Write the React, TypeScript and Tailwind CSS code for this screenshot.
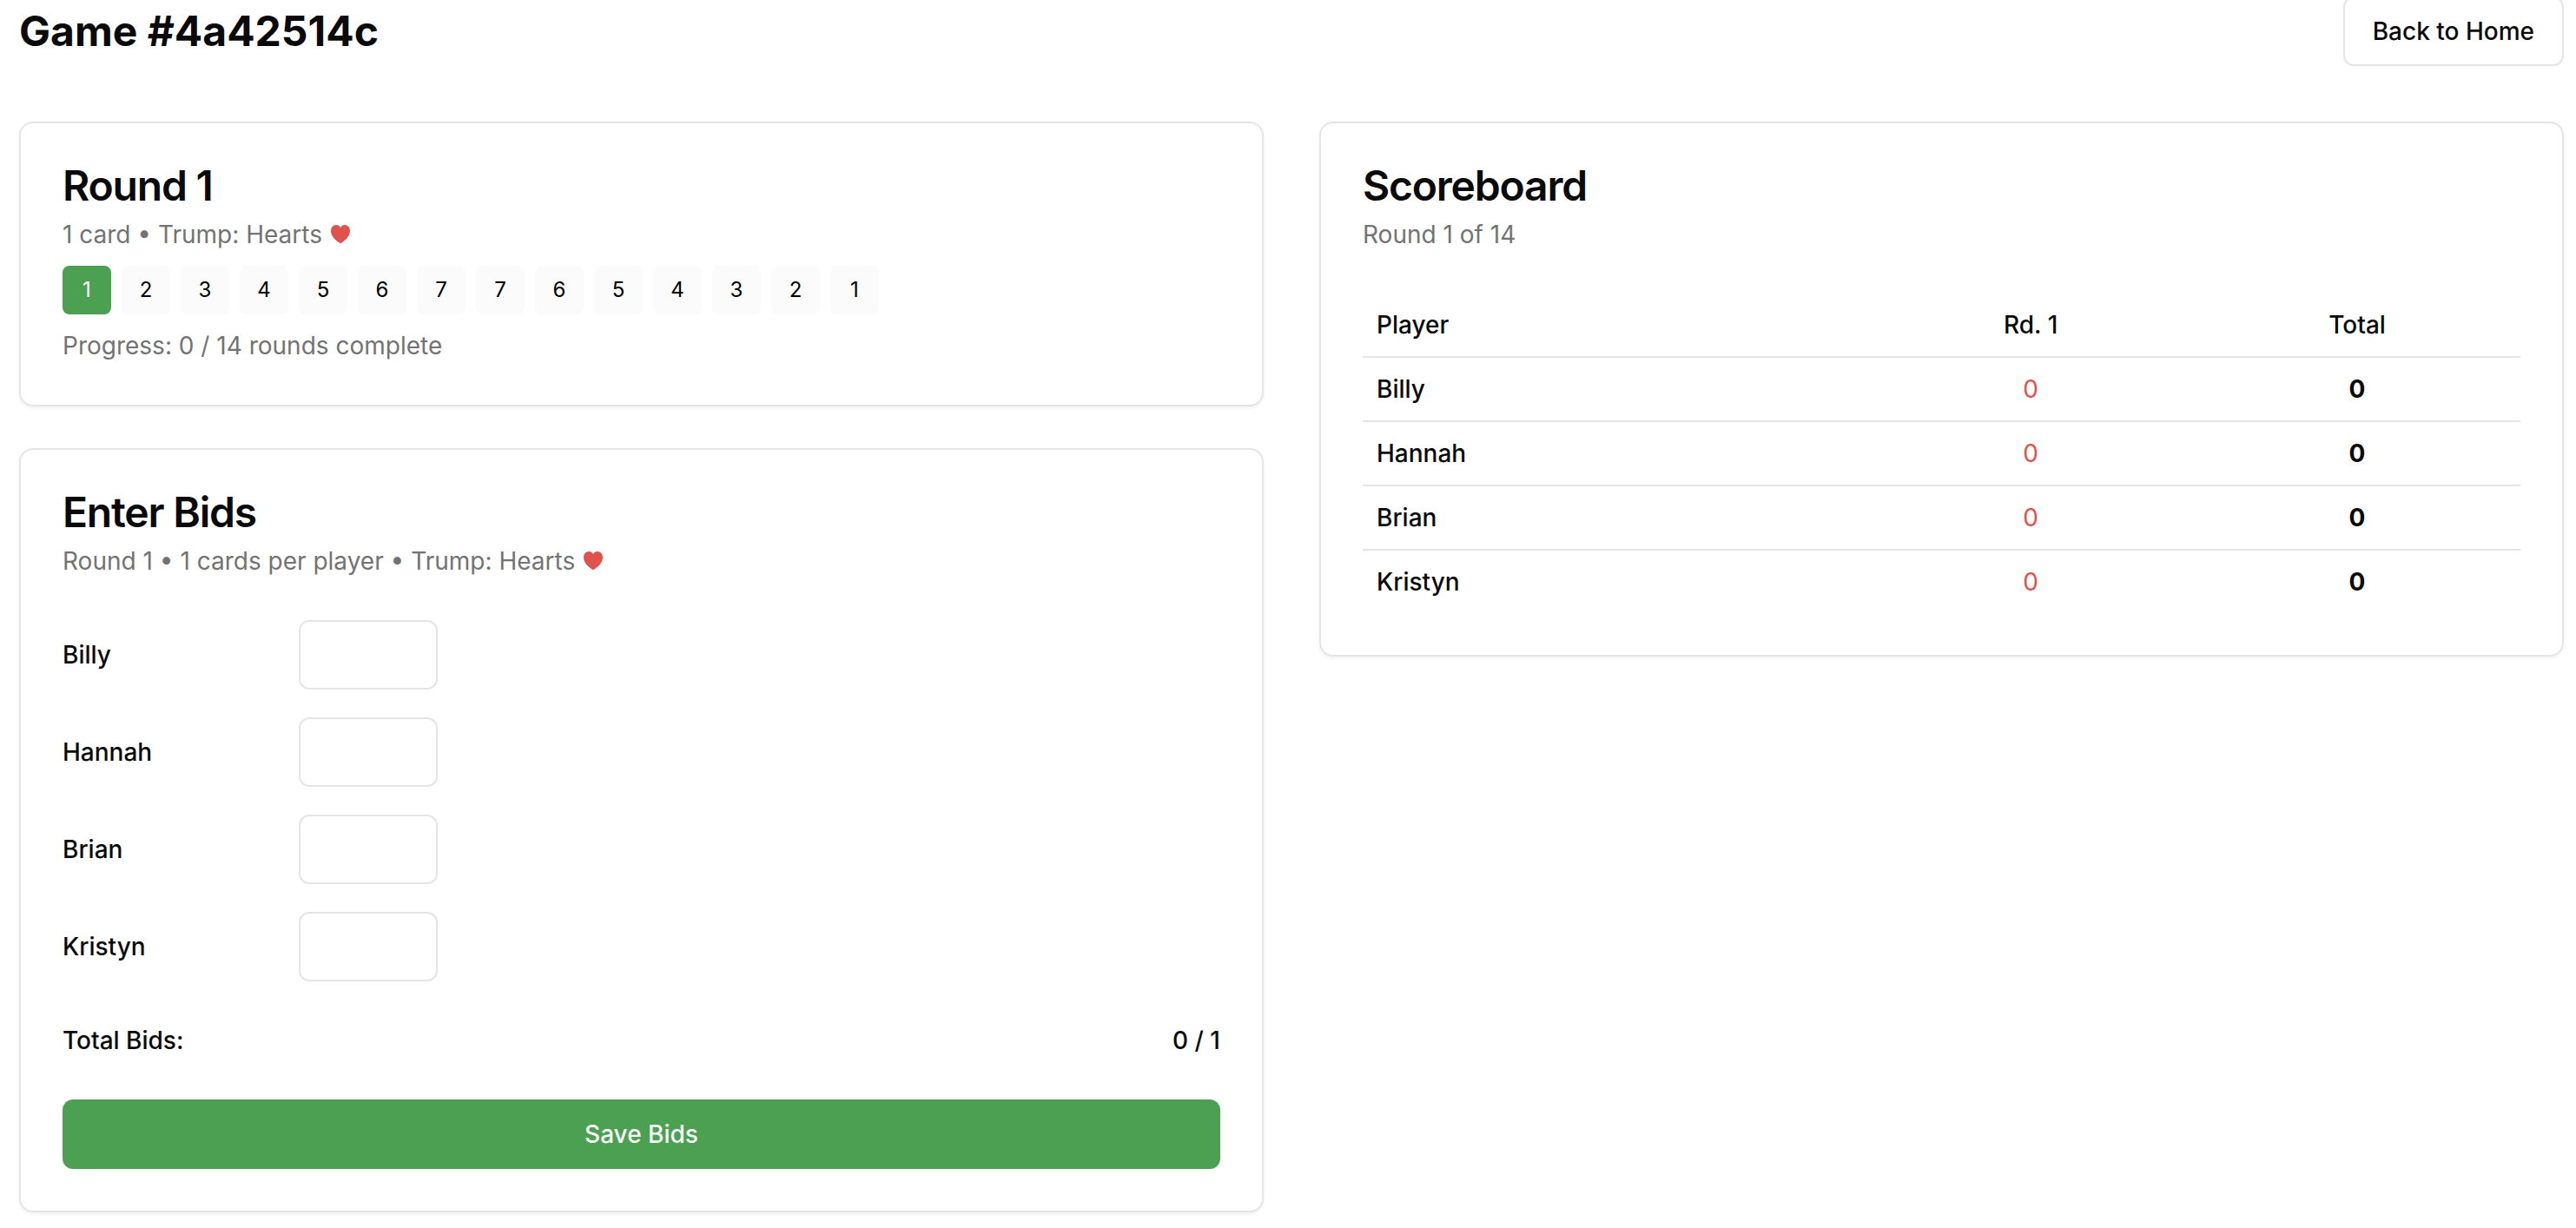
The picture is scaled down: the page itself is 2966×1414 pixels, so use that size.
import { useState, type ReactNode } from "react";

const players = ["Billy", "Hannah", "Brian", "Kristyn"];
const rounds = [1, 2, 3, 4, 5, 6, 7, 7, 6, 5, 4, 3, 2, 1];

function Heart() {
  return (
    <svg
      viewBox="0 0 22 21"
      className="ml-0.5 inline-block h-[21px] w-[22px] align-baseline text-[#df524d]"
      fill="currentColor"
      role="img"
      aria-label="Hearts"
    >
      <path d="M11 21C10.6 21 10.2 20.7 9.7 20.4C4 16.600 0 11.900 0 6.900C0 2.800 2.700 0 6.100 0C8.300 0 10 1.100 11 2.900C12 1.100 13.700 0 15.900 0C19.300 0 22 2.800 22 6.900C22 11.900 18 16.600 12.300 20.400C11.800 20.700 11.400 21 11 21Z" />
    </svg>
  );
}

function Card({
  title,
  description,
  children,
}: {
  title: string;
  description: ReactNode;
  children: ReactNode;
}) {
  return (
    <section className="rounded-2xl border-2 border-neutral-200 bg-white p-12 shadow-[0_2px_4px_rgba(0,0,0,0.06)]">
      <h2 className="text-5xl leading-none font-semibold tracking-tight">{title}</h2>
      <p className="mt-3 text-[28px] leading-10 text-neutral-500">{description}</p>
      {children}
    </section>
  );
}

function RoundCard() {
  return (
    <Card
      title="Round 1"
      description={
        <>
          1 card • Trump: Hearts <Heart />
        </>
      }
    >
      <ol className="mt-4 flex flex-wrap gap-3">
        {rounds.map((cards, i) => (
          <li
            key={i}
            className={
              i === 0
                ? "flex size-14 items-center justify-center rounded-lg bg-[#4ba052] text-2xl text-white"
                : "flex size-14 items-center justify-center rounded-lg bg-[#fbfbfb] text-2xl text-black"
            }
          >
            {cards}
          </li>
        ))}
      </ol>
      <p className="mt-4 text-[28px] leading-10 text-neutral-500">
        Progress: 0 / 14 rounds complete
      </p>
    </Card>
  );
}

function BidsCard() {
  const [bids, setBids] = useState<Record<string, string>>({});
  const total = players.reduce((sum, p) => sum + (Number(bids[p]) || 0), 0);

  return (
    <Card
      title="Enter Bids"
      description={
        <>
          Round 1 • 1 cards per player • Trump: Hearts <Heart />
        </>
      }
    >
      <form
        className="mt-12 text-[28px] leading-10 font-medium"
        onSubmit={(e) => e.preventDefault()}
      >
        <div className="flex flex-col gap-8">
          {players.map((player) => (
            <div key={player} className="flex items-center gap-8">
              <label htmlFor={`bid-${player}`} className="w-60">
                {player}
              </label>
              <input
                id={`bid-${player}`}
                type="text"
                inputMode="numeric"
                value={bids[player] ?? ""}
                onChange={(e) => setBids({ ...bids, [player]: e.target.value })}
                className="h-20 w-40 rounded-xl border-2 border-neutral-200 bg-white px-6"
              />
            </div>
          ))}
        </div>
        <div className="mt-12 flex justify-between">
          <span>Total Bids:</span>
          <span>{total} / 1</span>
        </div>
        <button
          type="submit"
          className="mt-12 h-20 w-full rounded-xl bg-[#4ba052] text-neutral-50"
        >
          Save Bids
        </button>
      </form>
    </Card>
  );
}

function ScoreboardCard() {
  return (
    <Card title="Scoreboard" description="Round 1 of 14">
      <table className="mt-12 w-full table-fixed text-[28px] leading-10">
        <thead>
          <tr className="border-b-2 border-neutral-200">
            <th scope="col" className="p-4 text-left font-medium">
              Player
            </th>
            <th scope="col" className="w-[28.2%] p-4 text-center font-medium">
              Rd. 1
            </th>
            <th scope="col" className="w-[28.2%] p-4 text-center font-medium">
              Total
            </th>
          </tr>
        </thead>
        <tbody>
          {players.map((player) => (
            <tr key={player} className="border-b-2 border-neutral-200 last:border-b-0">
              <th scope="row" className="p-4 text-left font-medium">
                {player}
              </th>
              <td className="p-4 text-center text-[#df524d]">0</td>
              <td className="p-4 text-center font-bold">0</td>
            </tr>
          ))}
        </tbody>
      </table>
    </Card>
  );
}

export default function App() {
  return (
    <main className="-mt-1 bg-white pr-[14px] pb-4 pl-[22px] font-['Inter',sans-serif] text-neutral-950">
      <header className="mb-16 flex items-center justify-between">
        <h1 className="text-5xl leading-none font-bold">Game #4a42514c</h1>
        <button
          type="button"
          className="h-20 rounded-xl border-2 border-neutral-200 bg-white px-8 text-[28px] leading-10 font-medium"
        >
          Back to Home
        </button>
      </header>
      <div className="grid grid-cols-2 items-start gap-16">
        <div className="flex flex-col gap-12">
          <RoundCard />
          <BidsCard />
        </div>
        <ScoreboardCard />
      </div>
    </main>
  );
}
